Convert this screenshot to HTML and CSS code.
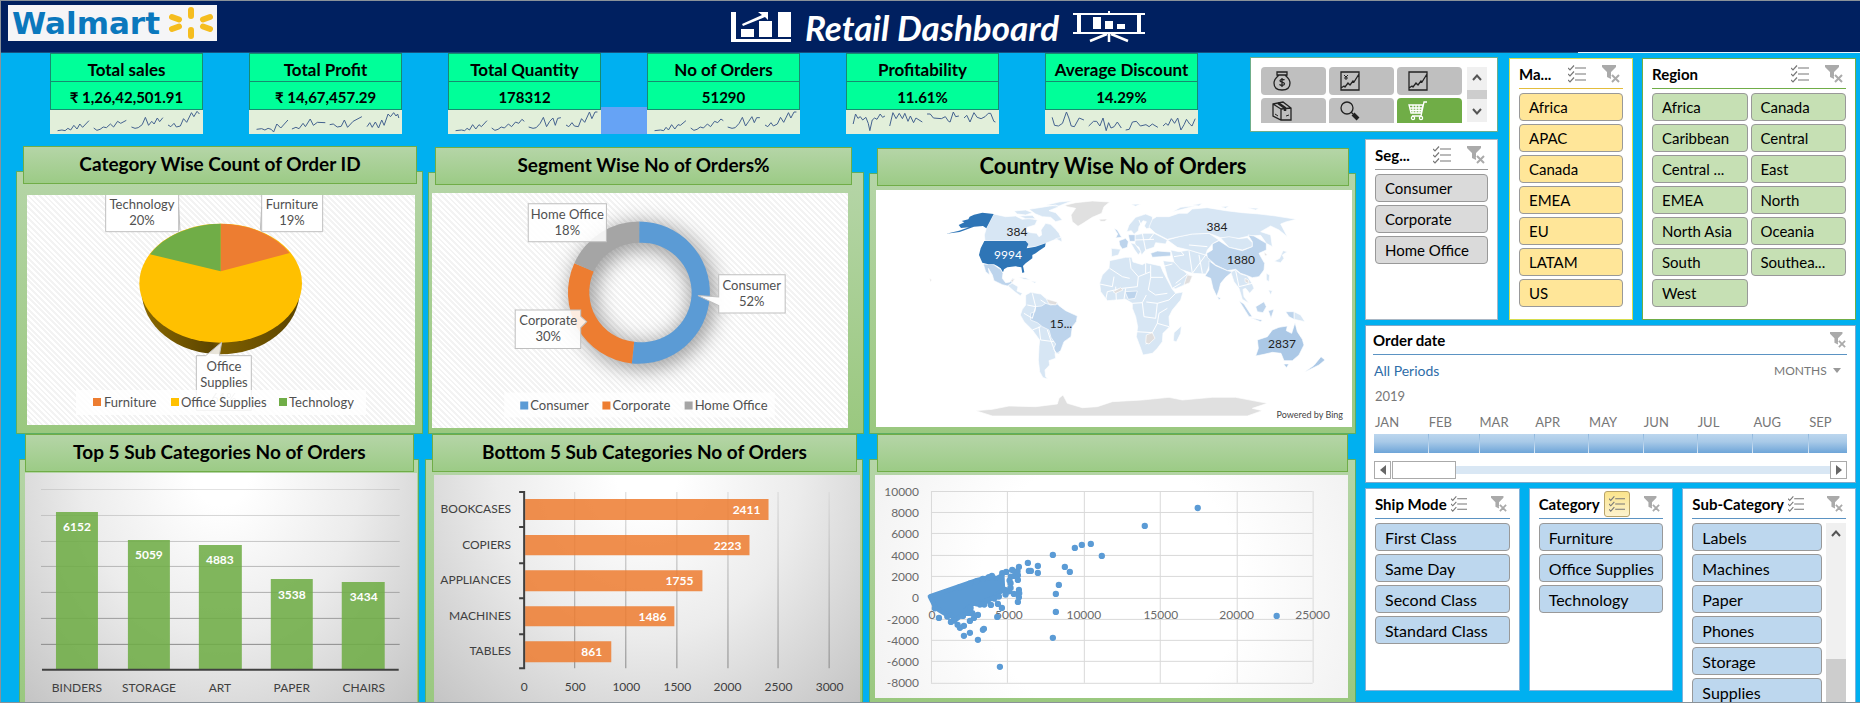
FILE: index.html
```html
<!DOCTYPE html>
<html lang="en">
<head>
<meta charset="utf-8">
<title>Retail Dashboard</title>
<link rel="stylesheet" href="styles.css">
</head>
<body>
<svg class="defs" aria-hidden="true">
  <symbol id="multi" viewBox="0 0 18 17"><g fill="none" stroke="#777" stroke-width="1.2"><path d="M7 2.5h11M7 8.5h11M7 14.5h11"/><path d="M0 2.5l2 2 4-4.5M0 8.5l2 2 4-4.500M0 14.500l2 2 4-4.500"/></g></symbol>
  <symbol id="clear" viewBox="0 0 18 18"><path fill="#aaa" d="M0 0h14v2L9 7v7l-4-2V7L0 2z"/><path fill="none" stroke="#fff" stroke-width="4" d="M10 10l7 7M17 10l-7 7"/><path fill="none" stroke="#aaa" stroke-width="2" d="M10 10l7 7M17 10l-7 7"/></symbol>
  <symbol id="up" viewBox="0 0 10 7"><path fill="none" stroke="#555" stroke-width="2" d="M1 6l4-4.500 4 4.500"/></symbol>
  <symbol id="down" viewBox="0 0 10 7"><path fill="none" stroke="#555" stroke-width="2" d="M1 1l4 4.500 4-4.500"/></symbol>
</svg>

<header class="top">
  <div class="logo"><span class="logo-name">Walmart</span>
    <svg class="spark" viewBox="0 0 44 32" aria-hidden="true"><g stroke="#f5bd1f" stroke-width="6" stroke-linecap="round"><path d="M22 3v6M22 23v6M3 10l7 2.500M3 22l7-2.500M41 10l-7 2.500M41 22l-7-2.500"/></g></svg>
  </div>
  <div class="brand">
    <svg class="brand-chart" viewBox="0 0 60 32" aria-hidden="true"><g fill="#fff"><path d="M0 1h5v27h55v3H0zM10 18h13v8H10zM28 10h13v16H28zM47 1h13v25H47z"/><path d="M27 1h10v8l-3-3-22 9-1-2 20-9z"/></g></svg>
    <h1>Retail Dashboard</h1>
    <svg class="brand-board" viewBox="0 0 72 32" aria-hidden="true"><g fill="none" stroke="#fff"><path stroke-width="2" d="M0 3h72M0 22h72M36 0v3"/><path stroke-width="4" d="M6 3v19M66 3v19"/><path stroke-width="2.500" d="M36 22v9M34 23L17 30M38 23l17 7"/></g><path fill="#fff" d="M20 6h8v12h-8zM32 10h8v8h-8zM44 13h8v5h-8z"/></svg>
  </div>
</header>

<main class="board">
  <section class="kpis">
    <div class="kpi"><h2>Total sales</h2><p>₹ 1,26,42,501.91</p>
      <svg viewBox="0 0 385 72" preserveAspectRatio="none"><path d="M19 62L30 60 38 62 45 55 52 60 60 46 68 57 75 42 82 52 98 32M110 54L118 61 126 58 134 51 142 53 152 42 160 51 170 34 178 40 192 31M205 51L214 55 222 53 232 44 240 22 248 46 256 34 262 42 270 24 276 35 284 23M297 45L304 50 312 40 318 51 328 48 336 26 344 37 356 8 362 20 370 4 376 12"/></svg></div>
    <div class="kpi"><h2>Total Profit</h2><p>₹ 14,67,457.29</p>
      <svg viewBox="0 0 385 72" preserveAspectRatio="none"><path d="M19 58L32 56 40 60 48 55 56 58 62 66 70 42 80 54 98 30M108 57L118 52 126 56 136 40 142 50 154 27 162 46 172 37 192 38M203 44L212 42 222 51 232 49 240 30 248 52 262 34 284 20M297 50L304 38 310 52 318 36 326 54 334 30 340 46 350 12 356 20 364 8 370 18 374 12 377 24"/></svg></div>
    <div class="kpi"><h2>Total Quantity</h2><p>178312</p>
      <svg viewBox="0 0 385 72" preserveAspectRatio="none"><path d="M19 62L34 60 42 62 48 55 54 60 62 44 70 57 78 44 84 50 98 32M110 54L118 61 126 58 134 51 142 54 152 42 160 50 170 36 178 40 186 28 192 34M203 51L214 55 222 53 232 40 240 22 248 50 256 34 264 24 270 46 276 25 284 23M297 45L304 50 312 38 318 48 328 50 336 26 344 37 356 6 362 26 370 6 376 6"/></svg></div>
    <div class="kpi selected"><h2>No of Orders</h2><p>51290</p>
      <svg viewBox="0 0 385 72" preserveAspectRatio="none"><path d="M19 62L34 60 42 62 48 52 54 60 62 44 70 57 78 44 84 46 98 32M110 54L118 61 126 58 134 51 142 54 152 42 160 50 170 34 178 38 186 27 192 32M203 51L214 55 222 53 232 40 240 22 248 48 256 34 264 20 270 38 276 23 284 23M297 45L304 50 312 38 318 48 328 42 336 22 344 37 356 8 362 24 370 6 376 6"/></svg></div>
    <div class="kpi"><h2>Profitability</h2><p>11.61%</p>
      <svg viewBox="0 0 385 72" preserveAspectRatio="none"><path d="M18 42L24 12 30 25 36 20 42 30 50 22 56 40 60 62 66 30 72 24 78 28 86 12 92 22 98 18M110 48L118 8 126 26 134 10 142 26 148 10 156 34 162 18 170 38 176 24 192 36M204 12L212 12 220 24 240 26 250 20 258 34 262 36 270 6 276 20 284 18M297 24L304 16 312 36 322 8 330 22 340 26 350 20 358 10 364 10 372 34 376 36"/></svg></div>
    <div class="kpi"><h2>Average Discount</h2><p>14.29%</p>
      <svg viewBox="0 0 385 72" preserveAspectRatio="none"><path d="M18 22L24 46 34 48 44 40 54 6 60 24 66 48 74 50 86 24 98 30M110 48L122 34 130 34 138 48 146 24 154 62 160 38 166 54 174 50 182 36 192 54M203 60L212 58 220 36 230 34 240 48 254 44 262 50 270 42 284 52M297 48L304 40 310 46 318 26 326 40 334 24 342 60 350 44 356 28 364 42 370 48 378 26"/></svg></div>
  </section>

  <section class="picker" aria-label="Measure">
    <div class="picker-grid">
      <button aria-label="Sales"><svg viewBox="0 0 20 20"><path d="M5 1h10v3H5zM7 4C5 6 2 8 2 12c0 5 3 7 8 7s8-2 8-7c0-4-3-6-5-8"/><path d="M12.500 9c-1-1-4.500-1-4.500.8s4.500 1 4.500 3-4 2-5 .6M10 7v9"/></svg></button>
      <button aria-label="Profit"><svg viewBox="0 0 20 20"><path d="M1 1h18v18H1zM1 17l3-2 1 1 3-4 2 2 3-4 1 1 5-8"/><path stroke-width="1" d="M4 4l2 2 2-2M6 6v3M4 7h4"/></svg></button>
      <button aria-label="Trend"><svg viewBox="0 0 20 20"><path d="M1 1h18v18H1zM1 17l3-2 1 1 3-4 2 2 3-4 1 1 5-8"/></svg></button>
      <button aria-label="Quantity"><svg viewBox="0 0 20 20"><path d="M1 3l10-2 8 6v12H9l-8-4zM1 3l8 5v11M9 8l10-1"/><path stroke-width="2.500" d="M6 2l7 5v3"/><path stroke-width="1" d="M14 15l3-1M3 13l3 2"/></svg></button>
      <button aria-label="Search"><svg viewBox="0 0 20 20"><circle cx="7" cy="7" r="6"/><path stroke-width="4" d="M13 13l5 5"/><path d="M11 11l2 2"/></svg></button>
      <button class="on" aria-label="Orders"><svg viewBox="0 0 20 20"><path d="M19 1h-3l-3 14H4M1 4h14l-2 8H3zM2 7h12M3 9.500h10M5 4v8M8 4v8M11 4v8"/><circle cx="5" cy="17" r="1.600"/><circle cx="13" cy="17" r="1.600"/></svg></button>
    </div>
    <div class="bar small"><svg><use href="#up"/></svg><span class="thumb"></span><svg><use href="#down"/></svg></div>
  </section>

  <section class="charts">
    <div class="row first">
      <article class="panel p1"><h2>Category Wise Count of Order ID</h2>
        <svg class="plot hatch" viewBox="0 0 388 230" role="img" aria-label="Pie chart">
          <defs><linearGradient id="side"><stop offset="0" stop-color="#8a6800"/><stop offset=".45" stop-color="#5c4500"/><stop offset=".5" stop-color="#7d5e00"/><stop offset="1" stop-color="#5c4500"/></linearGradient></defs>
          <g transform="translate(-27 -54.660) scale(.33333)">
            <ellipse cx="662" cy="452" rx="237" ry="190" fill="url(#side)"/>
            <ellipse cx="662" cy="428.500" rx="244" ry="178.500" fill="#ffc000"/>
            <path fill="#ed7d31" d="M662 393V250A244 178.500 0 0 1 869 338Z"/>
            <path fill="#70ad47" d="M662 393V250A244 178.500 0 0 0 450 342Z"/>
            <g fill="#fff" stroke="#bfbfbf" stroke-width="3"><path d="M317 160V274H536V160M785 160V274H968V160"/><path fill="none" d="M536 200l4 70M785 200l-4 70"/><path fill-opacity=".85" d="M589 646h28l48-40-7 40h96v164H589z"/></g>
          </g>
          <g class="lbl"><text x="115" y="14">Technology</text><text x="115" y="30">20%</text><text x="265" y="14">Furniture</text><text x="265" y="30">19%</text><text x="197" y="176">Office</text><text x="197" y="192">Supplies</text><text x="197" y="208" opacity=".3">61%</text></g>
          <rect x="49" y="195" width="290" height="25" fill="#fff" opacity=".8"/>
          <path fill="#ed7d31" d="M66 203h8v8h-8z"/><path fill="#ffc000" d="M144 203h8v8h-8z"/><path fill="#70ad47" d="M252 203h8v8h-8z"/>
          <g class="lbl start"><text x="77" y="212">Furniture</text><text x="154" y="212">Office Supplies</text><text x="262" y="212">Technology</text></g>
        </svg></article>
      <article class="panel p2"><h2>Segment Wise No of Orders%</h2>
        <svg class="plot hatch" viewBox="0 0 415 234" role="img" aria-label="Doughnut chart">
          <defs><filter id="blur" x="-40%" y="-40%" width="180%" height="180%"><feGaussianBlur stdDeviation="34"/></filter></defs>
          <g transform="translate(-12.330 -53.660) scale(.33333)">
            <circle cx="668" cy="470" r="181" fill="none" stroke="#000" stroke-opacity=".45" stroke-width="64" filter="url(#blur)"/>
            <path fill="#5b9bd5" d="M657 246A213 213 0 1 1 635 671L642 606A149 149 0 1 0 657 310Z"/>
            <path fill="#ed7d31" d="M635 671A213 213 0 0 1 463 371L521 396A149 149 0 0 0 642 606Z"/>
            <path fill="#a5a5a5" d="M463 371A213 213 0 0 1 657 246V310A149 149 0 0 0 521 396Z"/>
            <g fill="#fff" fill-opacity=".85" stroke="#bfbfbf" stroke-width="3"><path d="M325 193h234v114H325z"/><path fill-opacity=".95" d="M895 406h199v114H895v-22l-62-30 62 4z"/><path d="M286 511h196v19l18 16-18 18v62H286z"/></g>
          </g>
          <g class="lbl"><text x="135" y="26">Home Office</text><text x="135" y="42">18%</text><text x="319" y="97">Consumer</text><text x="319" y="113">52%</text><text x="116" y="132">Corporate</text><text x="116" y="148">30%</text></g>
          <rect x="72" y="199" width="270" height="25" fill="#fff" opacity=".7"/>
          <path fill="#5b9bd5" d="M88 208h8v8h-8z"/><path fill="#ed7d31" d="M170 208h8v8h-8z"/><path fill="#a5a5a5" d="M252 208h8v8h-8z"/>
          <g class="lbl start"><text x="98" y="216">Consumer</text><text x="180" y="216">Corporate</text><text x="262" y="216">Home Office</text></g>
        </svg></article>
      <article class="panel p3"><h2>Country Wise No of Orders</h2>
        <svg class="plot" viewBox="0 0 476 237" role="img" aria-label="World map">
          <g transform="translate(-17 -50) scale(.33333)" stroke="#fff" stroke-width="2" stroke-linejoin="round">
            <g fill="#e0e0e0">
              <path d="M617 196L650 188 700 183 752 186 735 200 728 220 700 232 672 250 657 259 640 245 636 225 650 205 625 200ZM720 238L745 237 738 244 725 244Z"/>
              <path d="M350 812L400 808 450 798 530 800 595 792 600 775 612 765 625 790 670 803 715 800 760 785 850 780 930 772 970 780 1060 772 1130 772 1225 790 1180 805 1210 812 1165 828 400 828Z"/>
            </g>
            <g fill="#d7e6f4">
              <path d="M404 222L440 230 470 228 490 238 510 235 535 240 528 255 505 262 500 272 515 278 533 280 540 290 548 285 546 270 560 250 575 253 590 268 600 280 609 300 590 298 560 310 530 320 508 322 498 310 480 303 378 303 376 285 382 265Z"/>
              <path d="M465 213L500 210 520 218 500 225 475 222ZM510 208L560 200 590 195 600 200 570 212 590 218 610 240 590 245 575 232 550 230 530 222ZM480 228L520 226 530 236 500 236ZM560 196L600 186 640 182 600 198ZM590 296L607 292 609 306Z"/>
              <path d="M445 436L460 430 477 440 474 453 490 460 484 467 468 456ZM478 411L500 413 515 420 495 418ZM515 423L532 425 528 430Z"/>
              <path d="M500 465L515 457 545 462 560 475 595 488 600 497 620 512 655 528 652 545 640 560 636 590 615 605 605 630 600 642 588 640 590 655 570 662 572 675 558 690 560 710 568 717 552 713 542 695 538 660 540 620 542 600 520 570 495 545 484 525 490 508 500 495Z"/>
              <path d="M752 362L800 352 818 352 822 366 850 374 860 368 905 378 912 395 925 420 940 448 950 460 972 456 965 480 940 510 930 530 932 560 912 580 910 605 895 625 880 640 852 645 845 625 832 590 836 560 830 530 820 505 820 490 800 478 770 480 745 482 725 455 722 430 730 405 750 385ZM945 578L967 558 965 580 952 606 943 602Z"/>
              <path d="M912 362L945 366 965 385 985 402 1000 408 992 428 950 446 940 445 925 410Z"/>
              <path d="M935 330L960 335 990 330 1040 345 1060 360 1050 380 1040 402 1000 400 965 388 945 366Z"/>
              <path d="M925 300L960 290 1000 282 1050 280 1080 300 1060 312 1045 330 1040 345 990 330 955 322Z"/>
              <path d="M828 285L855 280 885 280 925 300 920 312 890 308 885 322 860 330 848 345 840 322 828 315Z"/>
              <path d="M803 275L810 255 830 232 860 222 880 230 882 262 862 266 856 258 862 245 852 242 840 260 838 272 825 283 817 272ZM757 325L785 328 778 345 758 350ZM815 308L828 312 845 335 838 345 826 328Z"/>
              <path d="M880 238L893 230 930 230 960 220 985 220 1000 207 1045 203 1100 212 1150 218 1200 222 1250 228 1312 238 1280 246 1265 252 1285 290 1260 270 1235 258 1205 275 1235 285 1240 320 1222 310 1205 286 1170 288 1140 295 1085 293 1050 280 1000 282 960 290 925 298 890 280 870 262ZM940 215L965 202 1010 197 970 208Z"/>
              <path d="M1085 294L1110 290 1140 296 1165 293 1180 308 1180 320 1150 330 1110 322Z"/>
              <path d="M1115 395L1130 390 1145 402 1165 408 1180 432 1185 445 1172 460 1160 445 1152 448 1155 470 1170 490 1150 478 1140 445 1125 425ZM1272 332L1285 335 1270 345 1275 355 1265 368 1245 364 1262 355ZM1222 400L1232 405 1230 425 1222 420ZM1228 450L1240 452 1235 465ZM1305 515L1325 525 1338 545 1305 538Z"/>
              <path d="M1165 203L1200 205 1190 210ZM1085 200L1110 198 1100 205ZM1000 195L1030 190 1020 198ZM815 193L845 192 830 199Z"/>
            </g>
            <g fill="#bdd4ec">
              <path d="M373 372L405 374 415 382 425 388 432 400 430 415 440 428 453 426 460 415 467 418 455 432 445 438 430 434 405 422 400 405 388 385 392 405 380 395Z"/>
              <path d="M530 500L548 498 560 490 575 495 595 492 600 497 620 512 655 528 652 545 640 560 636 590 615 605 605 632 594 640 583 628 590 612 576 592 570 570 550 560 535 548 515 540 515 520 528 515Z"/>
              <path d="M1080 302L1095 312 1110 322 1150 332 1180 320 1180 305 1167 285 1185 288 1222 310 1222 330 1200 340 1208 355 1217 370 1215 390 1200 410 1180 413 1160 405 1145 400 1130 388 1105 392 1070 375 1045 352 1043 340 1060 330 1060 312Z"/>
              <path d="M1050 362L1070 377 1105 392 1120 395 1112 402 1100 412 1085 430 1080 450 1073 469 1062 445 1055 415 1038 408 1050 390Z"/>
              <path d="M875 340L895 333 935 336 935 348 905 350 880 352ZM780 302L800 295 808 305 805 322 790 327 782 315ZM808 284L828 284 828 304 812 304ZM765 265L775 270 788 292 770 294 776 282ZM798 455L835 453 828 475 808 478Z"/>
              <path d="M1140 482L1155 492 1180 530 1170 530ZM1175 533L1210 540 1205 545ZM1190 500L1215 485 1222 500 1212 518 1195 515ZM1228 512L1245 508 1236 535ZM1280 515L1305 515 1305 538 1290 530ZM1075 470L1085 474 1080 480Z"/>
            </g>
            <path fill="none" stroke-width="3" d="M752 385L790 410 812 415M812 355L816 385 838 410 835 440M838 410L875 395V376M875 395V412H912M875 412L868 450 890 465 925 460M722 432L760 440 765 410M740 480L745 455 790 445 835 440M820 490L850 488 862 465M850 488L855 530 890 535 895 490 862 486M895 490L930 480 950 460M832 575L880 578 895 550 930 560M880 578L882 600 860 612M895 550L900 520 925 505M860 368V400M770 440L772 480M800 445L795 478M910 380L940 372M985 402L950 430M990 332L1000 400M1020 345L1030 400M940 445L965 430M955 322L975 345 945 350M1000 400L1040 345M520 570L545 560M505 495L530 500 520 535 495 520M520 460L530 500M540 560L545 600 585 605M565 570L575 600 590 640M545 480L560 490M850 280L860 330M828 300L885 298M885 280L870 300M990 315L1045 320M840 240L850 265M1130 392L1140 440 1180 430"/>
            <g fill="#e0dede"><path d="M985 405L1000 408 992 428 975 435 980 418ZM762 455L785 443 792 450 770 460ZM862 585L880 578 888 595 870 612 860 608ZM562 477L595 486 590 495 570 492ZM1158 415L1168 420 1170 432 1158 425ZM1215 335L1225 345 1218 348ZM455 420L467 416 460 428ZM212 415L218 420 214 427Z"/></g>
            <path fill="#abc8e6" d="M1195 600L1225 590 1240 570 1260 562 1285 558 1282 572 1298 580 1308 548 1315 575 1330 598 1335 615 1320 645 1300 662 1275 662 1266 640 1240 637 1215 643 1190 648 1198 625ZM1274 672L1290 672 1282 683ZM1386 650L1398 660 1380 675 1336 697 1365 676Z"/>
            <path fill="#2e75b6" stroke="none" d="M404 222L370 218 345 224 332 230 328 238 308 243 316 247 299 255 306 264 330 262 300 272 262 281 302 276 345 260 372 258 382 265ZM376 303H500L508 312 503 325 530 320 560 310 558 320 540 332 530 340 520 345 520 355 500 370 492 378 496 397 490 399 487 382 470 379 445 382 435 388 432 397 425 385 415 378 405 373 388 373 370 368 360 345 365 325Z"/>
          </g>
          <g class="map-lbl"><text x="141" y="46">384</text><text x="132" y="69" fill="#fff">9994</text><text x="341" y="41">384</text><text x="365" y="74">1880</text><text x="185" y="138">15...</text><text x="406" y="158">2837</text></g>
          <text class="credit" x="467" y="228">Powered by Bing</text>
        </svg></article>
    </div>
    <div class="row second">
      <article class="panel p4"><h2>Top 5 Sub Categories No of Orders</h2>
        <svg class="plot shade" viewBox="0 0 392 226" preserveAspectRatio="xMinYMin meet" role="img" aria-label="Column chart">
          <g stroke="#8a8a8a"><path opacity=".25" d="M16 16.500h359"/><path opacity=".35" d="M16 42.500h359"/><path opacity=".45" d="M16 68.500h359"/><path opacity=".55" d="M16 93.500h359"/><path opacity=".65" d="M16 119.500h359"/><path opacity=".8" d="M16 145.500h359"/><path d="M16 171.500h359"/></g>
          <path fill="#70ad47" fill-opacity=".88" d="M31 39h42v158H31zM103 67h42v130h-42zM174 72h43v125h-43zM246 106h42v91h-42zM317 109h43v88h-43z"/>
          <path stroke="#404040" stroke-width="2" d="M17 197h357"/>
          <g class="val"><text x="52" y="58">6152</text><text x="124" y="86">5059</text><text x="195" y="91">4883</text><text x="267" y="126">3538</text><text x="339" y="128">3434</text></g>
          <g class="axis"><text x="52" y="219">BINDERS</text><text x="124" y="219">STORAGE</text><text x="195" y="219">ART</text><text x="267" y="219">PAPER</text><text x="339" y="219">CHAIRS</text></g>
        </svg></article>
      <article class="panel p5"><h2>Bottom 5 Sub Categories No of Orders</h2>
        <svg class="plot shade" viewBox="0 0 426 222" preserveAspectRatio="xMinYMin meet" role="img" aria-label="Bar chart">
          <defs><linearGradient id="fade" gradientUnits="userSpaceOnUse" x1="0" y1="17" x2="0" y2="193"><stop offset="0" stop-color="#d8d8d8"/><stop offset="1" stop-color="#888"/></linearGradient></defs>
          <path fill="url(#fade)" d="M140 17h1v176h-1zM191 17h1v176h-1zM242 17h1v176h-1zM293 17h1v176h-1zM343 17h1v176h-1zM394 17h1v176h-1z"/>
          <path fill="#ed7d31" fill-opacity=".86" d="M91 24h243v21H91zM91 60h224v20H91zM91 95h177v21H91zM91 131h149v20H91zM91 166h86v21H91z"/>
          <path fill="none" stroke="#404040" stroke-width="2" d="M85 17h5v176h-5M85 52h5M85 88h5M85 123h5M85 159h5"/>
          <g class="val end"><text x="326" y="39">2411</text><text x="307" y="75">2223</text><text x="259" y="110">1755</text><text x="232" y="146">1486</text><text x="168" y="181">861</text></g>
          <g class="axis end"><text x="77" y="38">BOOKCASES</text><text x="77" y="74">COPIERS</text><text x="77" y="109">APPLIANCES</text><text x="77" y="145">MACHINES</text><text x="77" y="180">TABLES</text></g>
          <g class="axis"><text x="90" y="216">0</text><text x="141" y="216">500</text><text x="192" y="216">1000</text><text x="243" y="216">1500</text><text x="293" y="216">2000</text><text x="344" y="216">2500</text><text x="395" y="216">3000</text></g>
        </svg></article>
      <article class="panel p6"><h2></h2>
        <svg class="plot soft" viewBox="0 0 473 224" role="img" aria-label="Scatter chart">
          <path fill="none" stroke="#d9d9d9" d="M56.500 16v192M132.500 16v192M209.500 16v192M285.500 16v192M362.500 16v192M438.500 16v192M56 16.500h382M56 37.500h382M56 58.500h382M56 80.500h382M56 101.500h382M56 123.500h382M56 144.500h382M56 165.500h382M56 186.500h382M56 208.500h382"/>
          <g class="axis light"><text x="57" y="144">0</text><text x="134" y="144">5000</text><text x="209" y="144">10000</text><text x="286" y="144">15000</text><text x="362" y="144">20000</text><text x="438" y="144">25000</text></g>
          <g transform="translate(-16 -45) scale(.33333)" fill="#5b9bd5" stroke="#5b9bd5" stroke-linecap="round" stroke-linejoin="round">
            <path stroke-width="14" d="M213 500L300 470 350 452 400 440 412 446 430 436 432 480 415 494 400 506 370 516 340 522 320 540 305 558 290 570 275 556 260 552 240 540 228 530Z"/>
            <path fill="none" stroke-width="19" d="M1017 234h0M858 288h0M648 354h0M669 345h0M696 342h0M729 378h0M582 375h0M507 399h0M537 408h0M510 423h0M516 423h0M537 429h0M618 411h0M633 426h0M600 465h0M591 492h0M591 546h0M582 624h0M1254 558h0M423 711h0M480 411h0M460 420h0M476 424h0M477 436h0M442 426h0M430 430h0M477 450h0M456 440h0M455 460h0M455 474h0M440 494h0M465 492h0M480 480h0M481 490h0M480 502h0M477 516h0M372 447h0M390 442h0M399 438h0M352 455h0M303 472h0M332 461h0M450 484h0M438 480h0M376 524h0M363 524h0M396 525h0M417 522h0M429 534h0M415 561h0M353 520h0M357 555h0M345 564h0M333 573h0M340 550h0M327 549h0M312 558h0M285 572h0M276 576h0M296 585h0M303 594h0M315 588h0M315 618h0M333 609h0M357 630h0M372 600h0M375 597h0M240 564h0M265 560h0M228 535h0M420 500h0M335 534h0M386 512h0M406 506h0M452 452h0M466 438h0"/>
          </g>
          <g class="axis light end"><text x="44" y="21">10000</text><text x="44" y="42">8000</text><text x="44" y="63">6000</text><text x="44" y="85">4000</text><text x="44" y="106">2000</text><text x="44" y="127">0</text><text x="44" y="149">-2000</text><text x="44" y="170">-4000</text><text x="44" y="191">-6000</text><text x="44" y="212">-8000</text></g>
        </svg></article>
    </div>
  </section>

  <section class="slicer segment">
    <div class="head"><h3>Seg...</h3><button aria-label="Multi-select"><svg><use href="#multi"/></svg></button><button aria-label="Clear filter"><svg><use href="#clear"/></svg></button></div>
    <div class="items"><button>Consumer</button><button>Corporate</button><button>Home Office</button></div>
  </section>

  <section class="slicer market">
    <div class="head"><h3>Ma...</h3><button aria-label="Multi-select"><svg><use href="#multi"/></svg></button><button aria-label="Clear filter"><svg><use href="#clear"/></svg></button></div>
    <div class="items"><button>Africa</button><button>APAC</button><button>Canada</button><button>EMEA</button><button>EU</button><button>LATAM</button><button>US</button></div>
  </section>

  <section class="slicer region">
    <div class="head"><h3>Region</h3><button aria-label="Multi-select"><svg><use href="#multi"/></svg></button><button aria-label="Clear filter"><svg><use href="#clear"/></svg></button></div>
    <div class="items two"><button>Africa</button><button>Canada</button><button>Caribbean</button><button>Central</button><button>Central ...</button><button>East</button><button>EMEA</button><button>North</button><button>North Asia</button><button>Oceania</button><button>South</button><button>Southea...</button><button>West</button></div>
  </section>

  <section class="timeline">
    <div class="head"><h3>Order date</h3><button aria-label="Clear filter"><svg><use href="#clear"/></svg></button></div>
    <div class="period"><span>All Periods</span><label><select aria-label="Time level"><option>MONTHS</option></select><i></i></label></div>
    <div class="year">2019</div>
    <div class="months"><button>JAN</button><button>FEB</button><button>MAR</button><button>APR</button><button>MAY</button><button>JUN</button><button>JUL</button><button>AUG</button><button>SEP</button></div>
    <div class="scroll"><button class="prev" aria-label="Previous"></button><span class="handle"></span><span class="track"></span><button class="next" aria-label="Next"></button></div>
  </section>

  <div class="lower">
    <section class="slicer blue ship">
      <div class="head"><h3>Ship Mode</h3><button aria-label="Multi-select"><svg><use href="#multi"/></svg></button><button aria-label="Clear filter"><svg><use href="#clear"/></svg></button></div>
      <div class="items"><button>First Class</button><button>Same Day</button><button>Second Class</button><button>Standard Class</button></div>
    </section>
    <section class="slicer blue category">
      <div class="head"><h3>Category</h3><button class="lit" aria-label="Multi-select"><svg><use href="#multi"/></svg></button><button aria-label="Clear filter"><svg><use href="#clear"/></svg></button></div>
      <div class="items"><button>Furniture</button><button>Office Supplies</button><button>Technology</button></div>
    </section>
    <section class="slicer blue sub">
      <div class="head"><h3>Sub-Category</h3><button aria-label="Multi-select"><svg><use href="#multi"/></svg></button><button aria-label="Clear filter"><svg><use href="#clear"/></svg></button></div>
      <div class="list">
        <div class="items"><button>Labels</button><button>Machines</button><button>Paper</button><button>Phones</button><button>Storage</button><button>Supplies</button></div>
        <div class="bar"><svg><use href="#up"/></svg><span class="thumb"></span></div>
      </div>
    </section>
  </div>
</main>
</body>
</html>
```

FILE: styles.css
```css
* { box-sizing: border-box; }
body {
  margin: 0;
  height: 100vh;
  overflow: hidden;
  display: flex;
  flex-direction: column;
  background: #00b0f0;
  border: solid #8a9299;
  border-width: 1px 0 1px 1px;
  font-family: Lato, "Liberation Sans", sans-serif;
  color: #000;
}
h1, h2, h3, p { margin: 0; }
button { font: inherit; color: inherit; margin: 0; padding: 0; border: 0; background: none; }
.defs { position: absolute; width: 0; height: 0; }

.top {
  position: relative;
  flex: none;
  display: grid;
  grid-template-columns: 1fr auto 1fr;
  align-items: start;
  height: 52px;
  padding: 4px 0 0 7px;
  background: #002060;
  border-bottom: 1px solid #17507f;
}
.top::after { content: ""; position: absolute; top: 100%; right: 0; width: 282px; height: 1px; background: #eef3f8; }
.logo { display: flex; align-items: center; gap: 8px; width: 209px; height: 36px; padding-left: 4px; background: #f5f5f7; }
.logo-name { font: bold 31px/36px "DejaVu Sans", sans-serif; color: #0a78bd; width: 149px; }
.spark { width: 44px; height: 32px; }
.brand { display: flex; align-items: center; gap: 14px; margin-left: 8px; padding-top: 2px; color: #fff; }
.brand h1 { font-size: 35px; line-height: 40px; font-style: italic; font-weight: 700; }
.brand-chart { width: 60px; height: 32px; }
.brand-board { width: 72px; height: 32px; }

.board {
  flex: 1;
  min-height: 0;
  display: grid;
  grid-template-columns: minmax(0, 1225fr) minmax(0, 106fr) minmax(0, 133fr) minmax(0, 126fr) minmax(0, 214fr);
  grid-template-rows: 81px 181px 158px minmax(0, 1fr);
  gap: 5px 9px;
  padding: 0 4px 0 15px;
}

.kpis { grid-area: 1 / 1 / 2 / 2; display: grid; grid-template-columns: repeat(6, 1fr); gap: 46px; margin: 0 43px 0 34px; }
.kpi { position: relative; display: flex; flex-direction: column; text-align: center; }
.kpi h2, .kpi p { height: 29px; line-height: 32px; font-size: 17px; font-weight: 700; background: #00ff99; border: 1px solid #168c70; white-space: nowrap; }
.kpi p { height: 28px; line-height: 30px; font-size: 15px; border-top: 0; }
.kpi svg { width: 100%; height: 24px; background: #e2efda; }
.kpi path { fill: none; stroke: #44628f; stroke-width: 1px; vector-effect: non-scaling-stroke; }
.kpi.selected::before { content: ""; position: absolute; right: 100%; bottom: 0; width: 46px; height: 27px; background: #66a3f5; }

.picker { grid-area: 1 / 2 / 2 / 4; display: flex; gap: 5px; margin: 4px 0 2px; padding: 9px 10px 9px 10px; background: #fff; border: 1px solid #6fae8a; }
.picker-grid { flex: 1; display: grid; grid-template-columns: repeat(3, 1fr); grid-template-rows: 28px 25px; gap: 3px; }
.picker-grid button { display: flex; align-items: center; padding-left: 11px; background: #bfbfbf; border-radius: 4px; }
.picker-grid button:nth-child(n+4) { border-radius: 4px 4px 0 0; }
.picker-grid button.on { background: #70ad47; }
.picker-grid svg { width: 20px; height: 20px; fill: none; stroke: #222; stroke-width: 1.3; }
.picker-grid .on svg { stroke: #fff; }
.bar { display: flex; flex-direction: column; align-items: center; justify-content: space-between; width: 20px; background: #f0f0f0; padding: 7px 0; }
.bar svg { width: 10px; height: 7px; }
.bar .thumb { width: 100%; height: 9px; background: #cdcdcd; }

.charts { grid-area: 2 / 1 / 5 / 3; display: flex; flex-direction: column; min-height: 0; padding-top: 7px; }
.row { display: grid; }
.first { grid-template-columns: minmax(0, 407fr) minmax(0, 436fr) minmax(0, 487fr); gap: 5px; }
.second { flex: 1; min-height: 0; grid-template-columns: minmax(0, 400fr) minmax(0, 439fr) minmax(0, 487fr); gap: 6px; padding-left: 3px; }
.panel { display: flex; flex-direction: column; min-height: 0; margin-top: 25px; background: linear-gradient(#b5d5a7, #9ac87f); border: 1px solid #5dae62; }
.panel h2 {
  flex: none;
  height: 38px;
  margin-top: -26px;
  background: linear-gradient(#b5d5a7, #9ccb86);
  border: 1px solid #70ad47;
  font-size: 19px;
  line-height: 34px;
  text-align: center;
  white-space: nowrap;
}
.plot { display: block; width: 100%; background: #fff; }
.hatch { background: repeating-linear-gradient(45deg, #fff 0 2px, #f3f3f3 2px 4px); }
.shade { flex: 1; min-height: 0; background: radial-gradient(ellipse at 50% 0, #fff 10%, #ececec 50%, #c4c4c4 100%); }
.soft { background: radial-gradient(circle at 50% 50%, #fff 50%, #f2f2f2 100%); }
.p1 { padding: 0 7px 6px 10px; }
.p1 h2 { margin-left: -4px; margin-right: -2px; margin-bottom: 11px; }
.p2 { padding: 0 15px 5px 3px; margin-top: 26px; }
.p2 h2 { margin-left: 3px; margin-right: -4px; margin-bottom: 8px; }
.p3 { padding: 0 3px 5px 6px; margin-top: 27px; }
.p3 h2 { margin-left: 1px; margin-right: 3px; margin-bottom: 4px; font-size: 22px; }
.p4 { padding: 0 1px 0 5px; border-bottom: 0; }
.p4 h2 { margin-right: 3px; margin-bottom: 1px; }
.p5 { padding: 0 2px 0 8px; border-bottom: 0; }
.p5 h2 { margin-left: -2px; margin-right: 3px; margin-bottom: 3px; }
.p6 { padding: 0 7px 3px 5px; border-bottom: 0; }
.p6 h2 { margin-left: 2px; margin-bottom: 3px; }

.plot text { text-anchor: middle; font-size: 13px; }
.lbl text { font-size: 13px; fill: #505050; }
.plot .start text { text-anchor: start; }
.plot .end text { text-anchor: end; }
.plot .axis text { fill: #404040; font-size: 12px; }
.plot .light text { fill: #6a6a6a; }
.plot .val text { fill: #fff; font-weight: 700; font-size: 12px; }
.map-lbl { fill: #222; }
.plot .map-lbl text { font-size: 12px; }
.plot .credit { font-size: 9px; text-anchor: end; fill: #444; }

.slicer, .timeline { background: #fff; border: 1px solid #a9b7c4; padding: 0 9px; min-width: 0; }
.segment { grid-area: 2 / 3 / 3 / 4; }
.market { grid-area: 1 / 4 / 3 / 5; margin: 5px 0 0 2px; border-color: #d6dd4e; }
.region { grid-area: 1 / 5 / 3 / 6; margin-top: 5px; border-color: #70ad47; }
.head { display: flex; align-items: center; gap: 16px; height: 30px; border-bottom: 1px solid #999; margin-bottom: 4px; }
.head h3 { flex: 1; font-size: 15px; line-height: 28px; white-space: nowrap; }
.head button { display: flex; }
.head svg { width: 18px; height: 18px; }
.head button:last-child { margin-right: 3px; }
.market .head { border-color: #e3bd3c; }
.region .head { border-color: #70ad47; }
.items { display: grid; gap: 3px; }
.items.two { grid-template-columns: 1fr 1fr; }
.items button { height: 28px; padding-left: 9px; font-size: 15px; text-align: left; white-space: nowrap; background: #dadada; border: 1px solid #999; border-radius: 4px; }
.market .items button { background: #ffe699; }
.region .items button { background: #c6e0b4; }
.blue .items button { background: #bdd7ee; font-size: 16px; }

.timeline { grid-area: 3 / 3 / 4 / 6; padding: 0 8px 0 7px; border-color: #7fa8c9; }
.timeline .head { height: 29px; margin: 0; border-color: #5b93c3; }
.timeline .head h3 { line-height: 26px; }
.timeline .head svg { width: 16px; height: 16px; }
.timeline .head button { margin: 0 1px 0 0; }
.period { display: flex; justify-content: space-between; align-items: center; height: 31px; padding: 0 6px 0 1px; font-size: 14px; color: #2e6da8; }
.period label { display: flex; align-items: center; gap: 6px; }
.period select { appearance: none; border: 0; padding: 0; background: none; font: inherit; font-size: 12px; color: #777; }
.period i { border: solid transparent; border-width: 5px 4px 0; border-top-color: #999; }
.year { height: 22px; padding-left: 2px; font-size: 13px; line-height: 20px; color: #777; }
.months { display: grid; grid-template-columns: 54fr 51fr 56fr 54fr 55fr 54fr 56fr 56fr 39fr; margin-left: 1px; height: 45px; background: linear-gradient(#bcd6ee, #a9cae8 40%, #6ea5d8) bottom / 100% 19px no-repeat; }
.months button { display: flex; align-items: start; padding: 6px 0 0 1px; font-size: 13px; color: #777; background: linear-gradient(#8db7de, #dbe9f6) left bottom / 1px 19px no-repeat; }
.months button:first-child { background: none; }
.scroll { display: flex; align-items: center; margin: 8px 0 0 1px; }
.scroll button, .handle { display: flex; align-items: center; justify-content: center; width: 17px; height: 18px; border: 1px solid #aaa; background: #fff; }
.scroll .handle { width: 64px; margin-left: 1px; }
.prev::before, .next::before { content: ""; border: 5px solid transparent; }
.prev::before { border-left: 0; border-right: 6px solid #666; }
.next::before { border-right: 0; border-left: 6px solid #666; }
.track { flex: 1; height: 8px; background: #d9e7f4; }

.lower { grid-area: 4 / 3 / 5 / 6; display: grid; grid-template-columns: 155fr 145fr 174fr; gap: 9px; min-height: 0; }
.lower .slicer { border-color: #7fb2da; }
.lower .head { gap: 4px; border-color: #5b93c3; }
.lower .head svg { width: 16px; height: 16px; }
.ship, .category { margin-bottom: 11px; }
.lower .head h3 { flex: none; }
.lower .head button:last-child { margin-left: auto; }
.lower .head .lit { padding: 4px; background: linear-gradient(#fbe48b, #fdf3cf); border: 1px solid #b9a46a; border-radius: 3px; }
.sub { display: flex; flex-direction: column; min-height: 0; border-bottom: 0; }
.sub .head { flex: none; }
.list { display: flex; flex: 1; gap: 4px; min-height: 0; overflow: hidden; }
.list .items { flex: 1; align-content: start; }
.list .bar { padding-bottom: 0; height: 100%; }
.list .thumb { height: 43px; }
```
